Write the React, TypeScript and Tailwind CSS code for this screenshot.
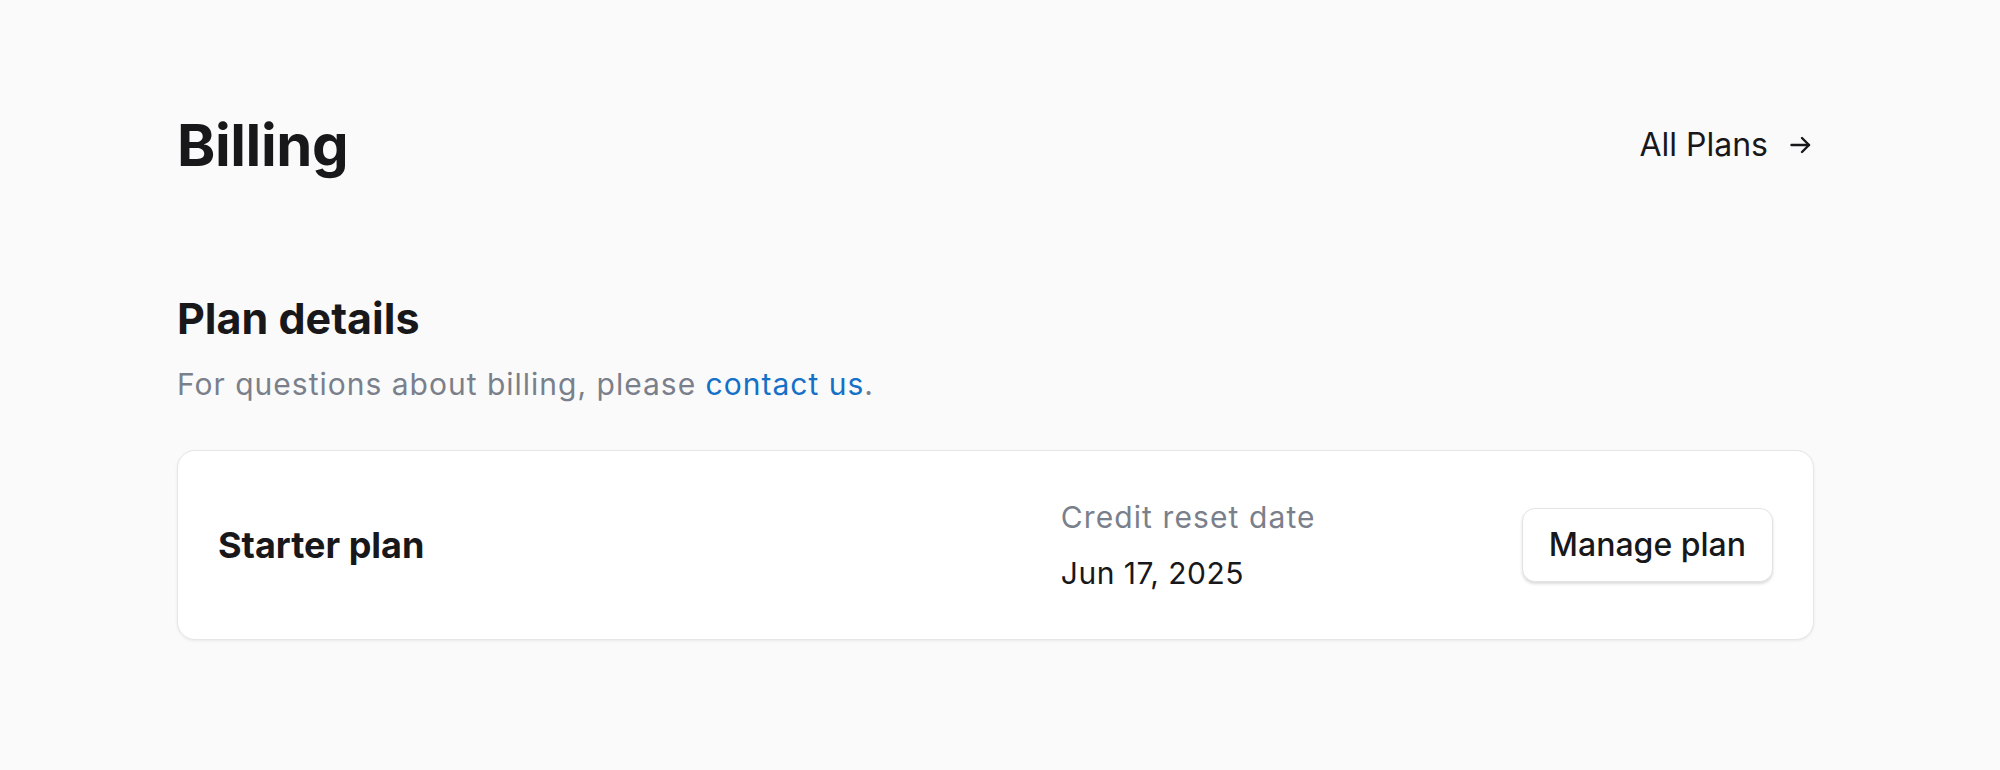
import React from 'react';

// Small arrow drawn to match the "All Plans" link
const ArrowRight = () => (
  <svg width="21" height="18" viewBox="0 0 21 18" fill="none" stroke="currentColor" strokeWidth="2.4" strokeLinecap="round" strokeLinejoin="round">
    <path d="M1.5 9H19" />
    <path d="M12 2l7 7-7 7" />
  </svg>
);

export default function App() {
  return (
    <div className="min-h-screen bg-[#fafafa] text-[#18181b]" style={{ fontFamily: 'Inter, "Noto Sans", sans-serif' }}>
      <main className="ml-[177px] w-[1637px] pt-[116px]">
        <div className="flex items-center justify-between">
          <h1 className="text-[58px] font-bold leading-[58px] tracking-[-0.4px]">Billing</h1>
          <a href="#" className="mr-[3px] flex items-center gap-[22px] text-[32px] leading-[32px] text-[#18181b]">
            All Plans
            <ArrowRight />
          </a>
        </div>

        <h2 className="mt-[123px] text-[43px] font-bold leading-[43px]">Plan details</h2>
        <p className="mt-[24px] text-[30px] leading-[40px] tracking-[1px] text-[#7a808b]">
          For questions about billing, please{' '}
          <a href="#" className="text-[#1570c7]">contact us</a>.
        </p>

        <div className="mt-[46px] flex items-center rounded-[18px] border border-[#e6e6e6] bg-white px-10 py-[46px] shadow-[0_1px_3px_rgba(0,0,0,0.07)]">
          <div className="flex-1 text-[36px] font-bold leading-[40px]">Starter plan</div>
          <div className="flex w-[461px] flex-col gap-4">
            <span className="text-[30px] leading-[40px] tracking-[1.1px] text-[#7a808b]">Credit reset date</span>
            <span className="text-[30px] leading-[40px] tracking-[0.5px]">Jun 17, 2025</span>
          </div>
          <button className="rounded-[13px] border border-[#e4e4e7] bg-white px-[26px] py-4 text-[32px] font-medium leading-[40px] shadow-[0_2px_3px_rgba(0,0,0,0.14)]">
            Manage plan
          </button>
        </div>
      </main>
    </div>
  );
}
